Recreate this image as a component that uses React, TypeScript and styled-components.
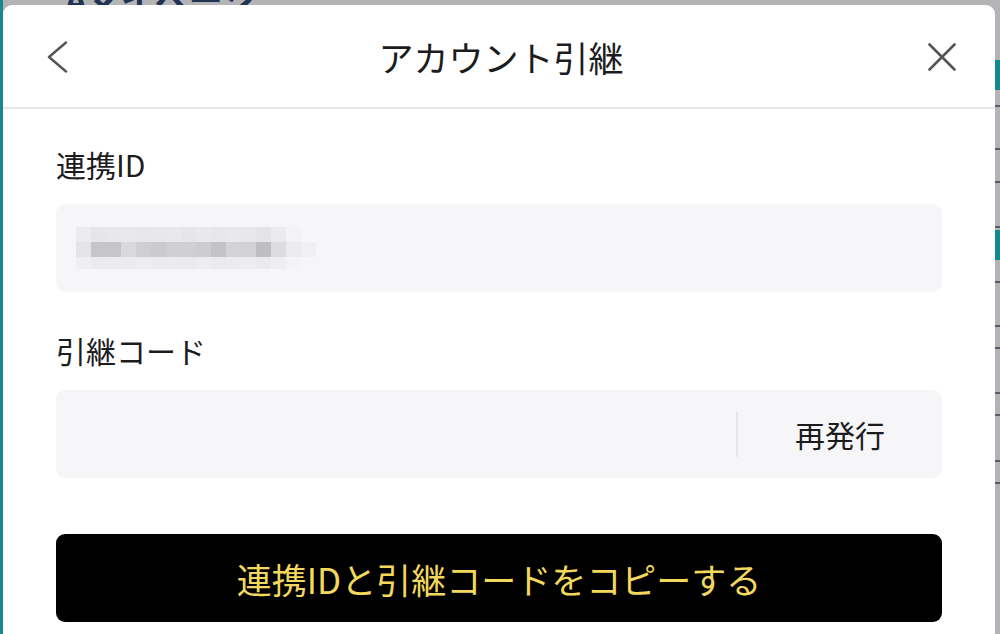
import React from "react";
import styled, { createGlobalStyle } from "styled-components";

const GlobalStyle = createGlobalStyle`
  html, body {
    margin: 0;
    padding: 0;
    width: 1000px;
    height: 634px;
    overflow: hidden;
    font-family: "Noto Sans CJK JP", "Noto Sans", sans-serif;
  }
  * { box-sizing: border-box; }
`;

const Backdrop = styled.div`
  position: relative;
  width: 1000px;
  height: 634px;
  background: #b4b4b6;
  border-left: 3px solid #14898e;
  overflow: hidden;
  display: flex;
  flex-direction: column;
  padding-top: 5px;
`;

const PeekText = styled.div`
  position: absolute;
  top: -26px;
  left: 62px;
  font-size: 34px;
  font-weight: 700;
  color: #1f3553;
  white-space: nowrap;
`;

const RightMark = styled.div<{ $top: number; $teal?: boolean }>`
  position: absolute;
  right: 0;
  top: ${(p) => p.$top}px;
  width: 5px;
  height: ${(p) => (p.$teal ? 30 : 2)}px;
  background: ${(p) => (p.$teal ? "#14898e" : "#5a5d68")};
`;

const Modal = styled.div`
  position: relative;
  z-index: 1;
  width: 992px;
  flex: 1;
  background: #ffffff;
  border-radius: 9px 9px 0 0;
  display: flex;
  flex-direction: column;
`;

const Header = styled.header`
  height: 104px;
  border-bottom: 2px solid #e7e7e9;
  display: grid;
  grid-template-columns: 120px 1fr 120px;
  align-items: center;
  padding: 2px 39px 0 43px;
`;

const IconButton = styled.button<{ $end?: boolean }>`
  justify-self: ${(p) => (p.$end ? "end" : "start")};
  background: none;
  border: none;
  padding: 0;
  display: flex;
  cursor: pointer;
`;

const Title = styled.h1`
  margin: 0;
  text-align: center;
  font-size: 35px;
  font-weight: 400;
  color: #1c1c1e;
  line-height: 1.3;
`;

const Body = styled.div`
  padding: 34px 53px 0;
  display: flex;
  flex-direction: column;
`;

const Section = styled.div`
  display: flex;
  flex-direction: column;
  gap: 19px;
  margin-bottom: 37px;
`;

const Label = styled.div`
  font-size: 30px;
  line-height: 42px;
  color: #1c1c1e;
`;

const Field = styled.div`
  height: 88px;
  background: #f6f6f8;
  border-radius: 9px;
  display: flex;
  align-items: center;
`;

const Mosaic = styled.div`
  margin-left: 20px;
  display: grid;
  grid-template-columns: repeat(16, 15px);
  grid-template-rows: 15px 15px 12px;
`;

const Pixel = styled.div<{ $c: string }>`
  background: ${(p) => p.$c};
`;

const CodeInput = styled.div`
  flex: 1;
  height: 100%;
`;

const Divider = styled.div`
  width: 2px;
  height: 45px;
  background: #e6e6e8;
`;

const Reissue = styled.button`
  width: 204px;
  height: 100%;
  background: none;
  border: none;
  font-family: inherit;
  font-size: 30px;
  color: #1c1c1e;
  cursor: pointer;
  padding: 0;
`;

const PrimaryButton = styled.button`
  margin-top: 19px;
  height: 88px;
  width: 100%;
  background: #000000;
  border: none;
  border-radius: 9px;
  color: #f2d85c;
  font-family: inherit;
  font-size: 35px;
  cursor: pointer;
`;

const row1 = ["#ececf0", "#e6e5e9", "#e8e7eb", "#e9e8ec", "#e7e6ea", "#e8e7eb", "#e9e8ec", "#e6e5e9", "#e9e8ec", "#e7e6ea", "#e9e8ec", "#e8e7eb", "#e4e3e7", "#ebeaee", "#f3f2f6", "#f6f6f8"];
const row2 = ["#e4e3e7", "#c6c5c9", "#c6c5c9", "#dad9dd", "#cfced2", "#cbcacf", "#cfced2", "#d0cfd3", "#cdccd0", "#c3c2c6", "#d4d3d7", "#d2d1d5", "#bebdc1", "#dddce0", "#ecebef", "#f0eff3"];
const row3 = ["#efeef2", "#ebeaee", "#ecebef", "#ebeaee", "#edecf0", "#ebeaee", "#ecebef", "#ebeaee", "#edecf0", "#ebeaee", "#ecebef", "#edecf0", "#eaeaee", "#efeef2", "#f4f4f6", "#f6f6f8"];

const BackIcon = () => (
  <svg width="22" height="32" viewBox="0 0 22 32" fill="none">
    <path d="M20 1.5 L3 16 L20 30.5" stroke="#555558" strokeWidth="2.4" strokeLinecap="round" strokeLinejoin="round" />
  </svg>
);

const CloseIcon = () => (
  <svg width="28" height="28" viewBox="0 0 28 28" fill="none">
    <path d="M1.5 1.5 L26.5 26.5 M26.5 1.5 L1.5 26.5" stroke="#555558" strokeWidth="2.6" strokeLinecap="round" />
  </svg>
);

export default function App() {
  const rows = [row1, row2, row3];
  return (
    <>
      <GlobalStyle />
      <Backdrop>
        <PeekText>Aマイページ</PeekText>
        <RightMark $top={60} $teal />
        <RightMark $top={105} />
        <RightMark $top={148} />
        <RightMark $top={181} />
        <RightMark $top={226} />
        <RightMark $top={230} $teal />
        <RightMark $top={281} />
        <RightMark $top={325} />
        <RightMark $top={347} />
        <RightMark $top={392} />
        <RightMark $top={414} />
        <RightMark $top={460} />
        <RightMark $top={482} />
        <Modal>
          <Header>
            <IconButton aria-label="戻る">
              <BackIcon />
            </IconButton>
            <Title>アカウント引継</Title>
            <IconButton $end aria-label="閉じる">
              <CloseIcon />
            </IconButton>
          </Header>
          <Body>
            <Section>
              <Label>連携ID</Label>
              <Field>
                <Mosaic>
                  {rows.map((r, ri) =>
                    r.map((c, ci) => <Pixel key={`${ri}-${ci}`} $c={c} />)
                  )}
                </Mosaic>
              </Field>
            </Section>
            <Section>
              <Label>引継コード</Label>
              <Field>
                <CodeInput />
                <Divider />
                <Reissue>再発行</Reissue>
              </Field>
            </Section>
            <PrimaryButton>連携IDと引継コードをコピーする</PrimaryButton>
          </Body>
        </Modal>
      </Backdrop>
    </>
  );
}
